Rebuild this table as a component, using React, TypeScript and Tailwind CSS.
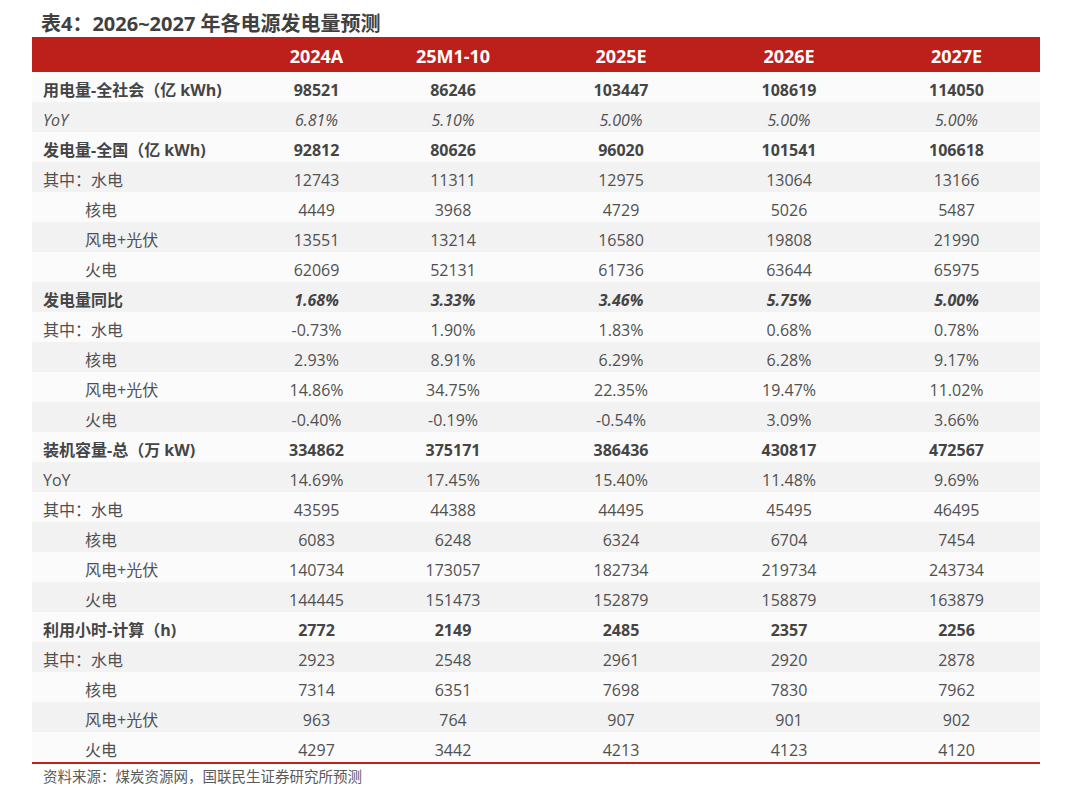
import React from "react";

type Row = {
  label: string;
  vals: string[];
  kind: "bold" | "normal" | "italic" | "bolditalic";
  indent?: "none" | "sub" | "deep";
  labelItalic?: boolean;
};

const rows: Row[] = [
  { label: "用电量-全社会（亿 kWh)", vals: ["98521", "86246", "103447", "108619", "114050"], kind: "bold" },
  { label: "YoY", vals: ["6.81%", "5.10%", "5.00%", "5.00%", "5.00%"], kind: "italic", labelItalic: true },
  { label: "发电量-全国（亿 kWh)", vals: ["92812", "80626", "96020", "101541", "106618"], kind: "bold" },
  { label: "其中：水电", vals: ["12743", "11311", "12975", "13064", "13166"], kind: "normal" },
  { label: "核电", vals: ["4449", "3968", "4729", "5026", "5487"], kind: "normal", indent: "deep" },
  { label: "风电+光伏", vals: ["13551", "13214", "16580", "19808", "21990"], kind: "normal", indent: "deep" },
  { label: "火电", vals: ["62069", "52131", "61736", "63644", "65975"], kind: "normal", indent: "deep" },
  { label: "发电量同比", vals: ["1.68%", "3.33%", "3.46%", "5.75%", "5.00%"], kind: "bolditalic" },
  { label: "其中：水电", vals: ["-0.73%", "1.90%", "1.83%", "0.68%", "0.78%"], kind: "normal" },
  { label: "核电", vals: ["2.93%", "8.91%", "6.29%", "6.28%", "9.17%"], kind: "normal", indent: "deep" },
  { label: "风电+光伏", vals: ["14.86%", "34.75%", "22.35%", "19.47%", "11.02%"], kind: "normal", indent: "deep" },
  { label: "火电", vals: ["-0.40%", "-0.19%", "-0.54%", "3.09%", "3.66%"], kind: "normal", indent: "deep" },
  { label: "装机容量-总（万 kW)", vals: ["334862", "375171", "386436", "430817", "472567"], kind: "bold" },
  { label: "YoY", vals: ["14.69%", "17.45%", "15.40%", "11.48%", "9.69%"], kind: "normal" },
  { label: "其中：水电", vals: ["43595", "44388", "44495", "45495", "46495"], kind: "normal" },
  { label: "核电", vals: ["6083", "6248", "6324", "6704", "7454"], kind: "normal", indent: "deep" },
  { label: "风电+光伏", vals: ["140734", "173057", "182734", "219734", "243734"], kind: "normal", indent: "deep" },
  { label: "火电", vals: ["144445", "151473", "152879", "158879", "163879"], kind: "normal", indent: "deep" },
  { label: "利用小时-计算（h)", vals: ["2772", "2149", "2485", "2357", "2256"], kind: "bold" },
  { label: "其中：水电", vals: ["2923", "2548", "2961", "2920", "2878"], kind: "normal" },
  { label: "核电", vals: ["7314", "6351", "7698", "7830", "7962"], kind: "normal", indent: "deep" },
  { label: "风电+光伏", vals: ["963", "764", "907", "901", "902"], kind: "normal", indent: "deep" },
  { label: "火电", vals: ["4297", "3442", "4213", "4123", "4120"], kind: "normal", indent: "deep" },
];

const headers = ["2024A", "25M1-10", "2025E", "2026E", "2027E"];
const grid = "grid grid-cols-[232px_105px_168px_168px_168px_167px]";

export default function App() {
  return (
    <div
      className="w-[1080px] h-[797px] bg-white text-[#404040] overflow-hidden"
      style={{ fontFamily: '"Open Sans", "Noto Sans CJK SC", sans-serif' }}
    >
      <div className="pl-[41px] pt-[10px] h-[37px] text-[20px] leading-[28px] font-bold text-[#404040] whitespace-nowrap">
        表4：2026~2027 年各电源发电量预测
      </div>
      <div className="ml-[32px] w-[1008px]">
        <div className={`${grid} h-[35px] bg-[#bd1f1b] text-white font-bold text-[18px] leading-[24px] items-center pt-[2px]`}>
          <div />
          {headers.map((h) => (
            <div key={h} className="text-center">
              {h}
            </div>
          ))}
        </div>
        {rows.map((r, i) => {
          const bold = r.kind === "bold" || r.kind === "bolditalic";
          const italic = r.kind === "italic" || r.kind === "bolditalic";
          const pad = r.indent === "deep" ? "pl-[53px]" : "pl-[11px]";
          return (
            <div
              key={i}
              className={`${grid} h-[30px] items-center pt-[5px] text-[16px] leading-[22px] ${
                i % 2 === 0 ? "bg-[#fbfbfb]" : "bg-[#f2f2f2]"
              } ${bold ? "font-bold text-[#454545]" : "text-[#505050]"}`}
            >
              <div className={`${pad} whitespace-nowrap ${r.labelItalic ? "italic" : ""}`}>{r.label}</div>
              {r.vals.map((v, j) => (
                <div key={j} className={`text-center ${italic ? "italic" : ""}`}>
                  {v}
                </div>
              ))}
            </div>
          );
        })}
        <div className="h-[2px] bg-[#c0201c]" />
      </div>
      <div className="pl-[43px] pt-[3px] text-[14.5px] leading-[20px] text-[#5a5a5a] whitespace-nowrap">
        资料来源：煤炭资源网，国联民生证券研究所预测
      </div>
    </div>
  );
}
